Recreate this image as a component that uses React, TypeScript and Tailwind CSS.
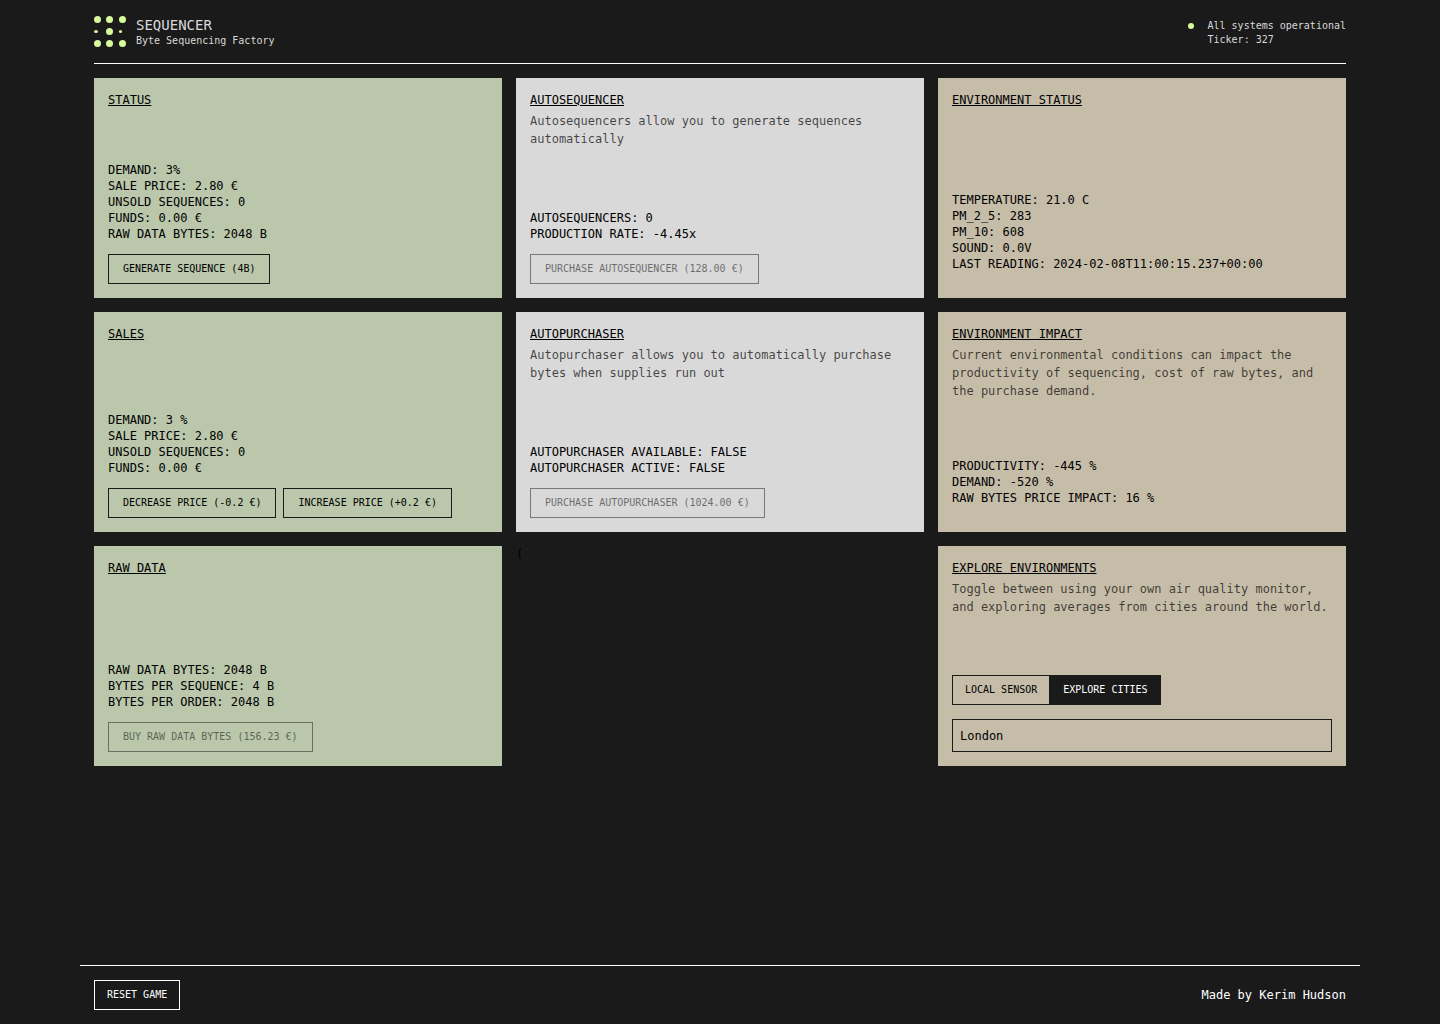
import { useState, type ButtonHTMLAttributes, type ReactNode } from 'react';

type Tone = 'green' | 'grey' | 'tan';

const tones: Record<Tone, string> = {
  green: 'bg-[#bac7ab]',
  grey: 'bg-[#d9d9d9]',
  tan: 'bg-[#c6bda9]',
};

function Card({
  tone,
  title,
  description,
  stats,
  children,
}: {
  tone: Tone;
  title: string;
  description?: string;
  stats?: string[];
  children?: ReactNode;
}) {
  return (
    <section className={`flex min-h-[220px] flex-col justify-between p-3.5 ${tones[tone]}`}>
      <div>
        <h2 className="text-[12px] leading-4 underline">{title}</h2>
        {description && <p className="mt-1 text-[12px] leading-[18px] text-black/70">{description}</p>}
      </div>
      <div>
        {stats && (
          <ul className="pb-3 text-[12px] leading-4">
            {stats.map((line) => (
              <li key={line}>{line}</li>
            ))}
          </ul>
        )}
        {children}
      </div>
    </section>
  );
}

function ActionButton({ className = 'border-[#1a1a1a] px-3.5', ...props }: ButtonHTMLAttributes<HTMLButtonElement>) {
  return (
    <button
      type="button"
      className={`h-[30px] border text-[10px] leading-4 whitespace-nowrap disabled:opacity-50 ${className}`}
      {...props}
    />
  );
}

const toggleClass =
  'border-[#1a1a1a] px-3 aria-pressed:bg-[#1a1a1a] aria-pressed:text-white';

function Logo() {
  return (
    <svg width="32" height="32" viewBox="0 0 32 32" fill="#d9f99d" aria-hidden="true">
      <circle cx="3.5" cy="3.5" r="3.5" />
      <circle cx="15.5" cy="3.5" r="3.5" />
      <circle cx="28.5" cy="3.5" r="3.5" />
      <ellipse cx="2" cy="15.5" rx="2" ry="1.6" />
      <circle cx="15.5" cy="15.5" r="3.5" />
      <circle cx="26.5" cy="15.5" r="1.6" />
      <circle cx="3.5" cy="27.5" r="3.5" />
      <circle cx="15.5" cy="27.5" r="3.5" />
      <circle cx="28.5" cy="27.5" r="3.5" />
    </svg>
  );
}

export default function App() {
  const [source, setSource] = useState<'local' | 'cities'>('cities');

  return (
    <div className="min-h-screen bg-[#1a1a1a] font-['DejaVu_Sans_Mono',monospace] text-black">
      <div className="mx-auto flex min-h-screen max-w-7xl flex-col">
        <header className="px-3.5">
          <div className="flex h-16 items-center justify-between border-b border-white text-[#d9d9d9]">
            <div className="flex items-center gap-2.5">
              <Logo />
              <div>
                <h1 className="text-[14px] leading-[18px]">SEQUENCER</h1>
                <p className="text-[10px] leading-[14px]">Byte Sequencing Factory</p>
              </div>
            </div>
            <div className="flex gap-3.5 pt-0.5 text-[10px] leading-[14px]">
              <span className="mt-1 h-1.5 w-1.5 rounded-full bg-[#d9f99d]" />
              <div>
                <p>All systems operational</p>
                <p>Ticker: 327</p>
              </div>
            </div>
          </div>
        </header>

        <main className="grid grid-cols-3 gap-3.5 p-3.5">
          <Card
            tone="green"
            title="STATUS"
            stats={['DEMAND: 3%', 'SALE PRICE: 2.80 €', 'UNSOLD SEQUENCES: 0', 'FUNDS: 0.00 €', 'RAW DATA BYTES: 2048 B']}
          >
            <ActionButton>GENERATE SEQUENCE (4B)</ActionButton>
          </Card>
          <Card
            tone="grey"
            title="AUTOSEQUENCER"
            description="Autosequencers allow you to generate sequences automatically"
            stats={['AUTOSEQUENCERS: 0', 'PRODUCTION RATE: -4.45x']}
          >
            <ActionButton disabled>PURCHASE AUTOSEQUENCER (128.00 €)</ActionButton>
          </Card>
          <Card
            tone="tan"
            title="ENVIRONMENT STATUS"
            stats={[
              'TEMPERATURE: 21.0 C',
              'PM_2_5: 283',
              'PM_10: 608',
              'SOUND: 0.0V',
              'LAST READING: 2024-02-08T11:00:15.237+00:00',
            ]}
          />
          <Card
            tone="green"
            title="SALES"
            stats={['DEMAND: 3 %', 'SALE PRICE: 2.80 €', 'UNSOLD SEQUENCES: 0', 'FUNDS: 0.00 €']}
          >
            <div className="flex flex-wrap gap-[7px]">
              <ActionButton>DECREASE PRICE (-0.2 €)</ActionButton>
              <ActionButton>INCREASE PRICE (+0.2 €)</ActionButton>
            </div>
          </Card>
          <Card
            tone="grey"
            title="AUTOPURCHASER"
            description="Autopurchaser allows you to automatically purchase bytes when supplies run out"
            stats={['AUTOPURCHASER AVAILABLE: FALSE', 'AUTOPURCHASER ACTIVE: FALSE']}
          >
            <ActionButton disabled>PURCHASE AUTOPURCHASER (1024.00 €)</ActionButton>
          </Card>
          <Card
            tone="tan"
            title="ENVIRONMENT IMPACT"
            description="Current environmental conditions can impact the productivity of sequencing, cost of raw bytes, and the purchase demand."
            stats={['PRODUCTIVITY: -445 %', 'DEMAND: -520 %', 'RAW BYTES PRICE IMPACT: 16 %']}
          />
          <Card
            tone="green"
            title="RAW DATA"
            stats={['RAW DATA BYTES: 2048 B', 'BYTES PER SEQUENCE: 4 B', 'BYTES PER ORDER: 2048 B']}
          >
            <ActionButton disabled>BUY RAW DATA BYTES (156.23 €)</ActionButton>
          </Card>
          <div className="text-[12px] leading-4">(</div>
          <Card
            tone="tan"
            title="EXPLORE ENVIRONMENTS"
            description="Toggle between using your own air quality monitor, and exploring averages from cities around the world."
          >
            <div className="flex">
              <ActionButton
                className={toggleClass}
                aria-pressed={source === 'local'}
                onClick={() => setSource('local')}
              >
                LOCAL SENSOR
              </ActionButton>
              <ActionButton
                className={toggleClass}
                aria-pressed={source === 'cities'}
                onClick={() => setSource('cities')}
              >
                EXPLORE CITIES
              </ActionButton>
            </div>
            <select
              aria-label="City"
              className="mt-3.5 block h-[33px] w-full appearance-none border border-[#1a1a1a] bg-transparent px-[7px] text-[12px]"
            >
              <option>London</option>
            </select>
          </Card>
        </main>

        <footer className="mt-auto flex items-center justify-between border-t border-white p-3.5 text-white">
          <ActionButton className="border-white px-3">RESET GAME</ActionButton>
          <p className="text-[12px] leading-4">Made by Kerim Hudson</p>
        </footer>
      </div>
    </div>
  );
}
